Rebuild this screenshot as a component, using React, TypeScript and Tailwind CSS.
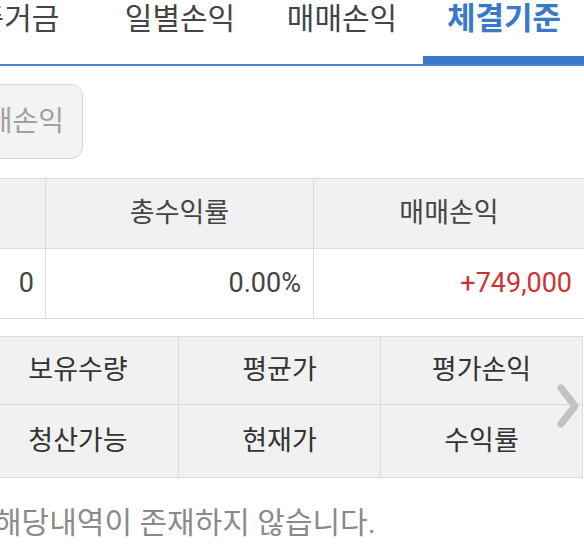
const tabs = [
  { label: '증거금', active: false },
  { label: '일별손익', active: false },
  { label: '매매손익', active: false },
  { label: '체결기준', active: true },
];

const summaryHead = ['', '총수익률', '매매손익'];

const gridRows = [
  ['보유수량', '평균가', '평가손익'],
  ['청산가능', '현재가', '수익률'],
];

export default function App() {
  return (
    <div className="relative h-[559px] w-[584px] overflow-hidden bg-white font-['Roboto','Noto_Sans_CJK_KR',sans-serif]">
      {/* 탭 */}
      <div className="flex border-b-2 border-[#4a86d0]">
        <div className="ml-[-63px] flex">
          {tabs.map((t) => (
            <div key={t.label} className="flex h-[64px] w-[162px] flex-col">
              <div
                className={`whitespace-nowrap text-center leading-[38px] ${
                  t.active ? 'text-[31px] font-bold text-[#3a78c8]' : 'text-[30px] text-[#444]'
                }`}>
                {t.label}
              </div>
              {t.active && <div className="mt-auto h-[8px] bg-[#3b78c8]" />}
            </div>
          ))}
        </div>
      </div>

      {/* 필터 버튼 */}
      <div className="mt-[18px] flex">
        <button
          type="button"
          className="ml-[-61px] flex h-[75px] w-[144px] items-center justify-end whitespace-nowrap rounded-[12px] border border-[#d5d5d5] bg-[#f3f3f3] pr-[18px] text-[28px] text-[#a0a0a0]">
          매매손익
        </button>
      </div>

      {/* 요약 */}
      <div className="mt-[19px] border-y border-[#dcdcdc] text-[27px] text-[#444]">
        <div className="flex h-[70px] border-b border-[#dcdcdc] bg-[#f1f1f1]">
          {summaryHead.map((h, i) => (
            <div
              key={i}
              className={`flex items-center justify-center ${
                i === 0 ? 'w-[46px] border-r border-[#dcdcdc]' : i === 1 ? 'w-[268px] border-r border-[#dcdcdc]' : 'flex-1'
              }`}>
              {h}
            </div>
          ))}
        </div>
        <div className="flex h-[69px] bg-white">
          <div className="flex w-[46px] items-center justify-end border-r border-[#dcdcdc] pr-[11px]">0</div>
          <div className="flex w-[268px] items-center justify-end border-r border-[#dcdcdc] pr-[12px]">0.00%</div>
          <div className="flex flex-1 items-center justify-end pr-[12px] text-[#cc3333]">+749,000</div>
        </div>
      </div>

      {/* 보유 항목 */}
      <div className="mt-[17px] flex">
        <div className="ml-[-22px] border-y border-[#dcdcdc] bg-[#f1f1f1] text-[27px] text-[#333]">
          {gridRows.map((row, r) => (
            <div
              key={r}
              className={`flex ${r === 0 ? 'h-[68px] border-b border-[#dcdcdc]' : 'h-[72px]'}`}>
              {row.map((c, i) => (
                <div
                  key={c}
                  className={`flex items-center justify-center border-r border-[#dcdcdc] ${
                    i === 0 ? 'w-[201px]' : 'w-[202px]'
                  }`}>
                  {c}
                </div>
              ))}
            </div>
          ))}
        </div>
      </div>

      <svg
        className="absolute left-[553px] top-[381px]"
        width="30"
        height="50"
        viewBox="0 0 30 50"
        fill="none">
        <polyline
          points="8,7 22,25 8,43"
          stroke="#c2c2c2"
          strokeWidth="7"
          strokeLinecap="round"
          strokeLinejoin="round"
        />
      </svg>

      <div className="ml-[-6px] mt-[25px] whitespace-nowrap text-[30px] leading-[40px] text-[#8a8a8a]">
        해당내역이 존재하지 않습니다.
      </div>
    </div>
  );
}
